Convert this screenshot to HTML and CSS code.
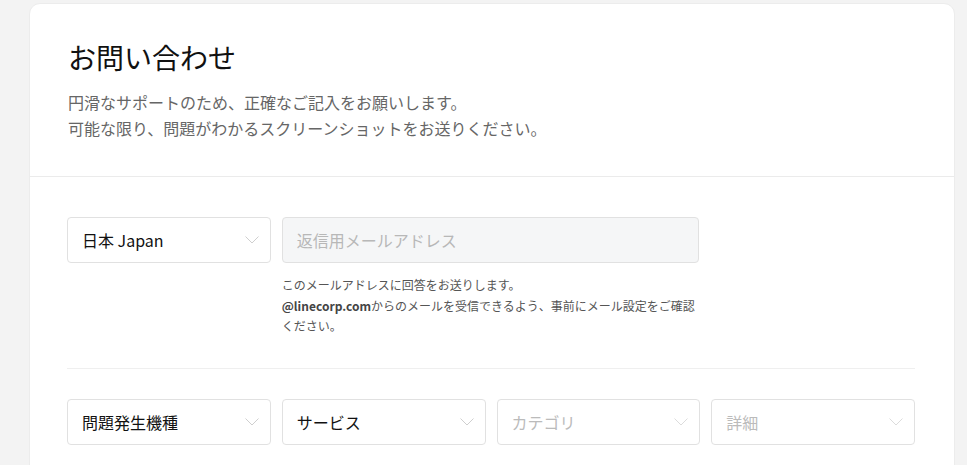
FILE: index.html
```html
<!DOCTYPE html>
<html lang="ja">
<head>
<meta charset="utf-8">
<title>お問い合わせ</title>
<link rel="stylesheet" href="styles.css">
</head>
<body>
<div class="page">
  <div class="card">
    <header class="card-head">
      <h1 class="title">お問い合わせ</h1>
      <p class="lead">円滑なサポートのため、正確なご記入をお願いします。<br>可能な限り、問題がわかるスクリーンショットをお送りください。</p>
    </header>
    <section class="card-body">
      <div class="row row-mail">
        <div class="select">
          <span class="value">日本 Japan</span>
          <svg class="chev" width="14" height="8" viewBox="0 0 14 8"><polyline points="0.5,0.5 7,7 13.5,0.5" fill="none" stroke="#cfcfcf" stroke-width="1"/></svg>
        </div>
        <div class="mail-col">
          <div class="input"><span class="ph">返信用メールアドレス</span></div>
          <p class="help">このメールアドレスに回答をお送りします。<br><b>@linecorp.com</b>からのメールを受信できるよう、事前にメール設定をご確認<br>ください。</p>
        </div>
      </div>
      <hr class="sep">
      <div class="row row-four">
        <div class="select">
          <span class="value">問題発生機種</span>
          <svg class="chev" width="14" height="8" viewBox="0 0 14 8"><polyline points="0.5,0.5 7,7 13.5,0.5" fill="none" stroke="#cfcfcf" stroke-width="1"/></svg>
        </div>
        <div class="select">
          <span class="value">サービス</span>
          <svg class="chev" width="14" height="8" viewBox="0 0 14 8"><polyline points="0.5,0.5 7,7 13.5,0.5" fill="none" stroke="#cfcfcf" stroke-width="1"/></svg>
        </div>
        <div class="select">
          <span class="value ph">カテゴリ</span>
          <svg class="chev" width="14" height="8" viewBox="0 0 14 8"><polyline points="0.5,0.5 7,7 13.5,0.5" fill="none" stroke="#dcdcdc" stroke-width="1"/></svg>
        </div>
        <div class="select">
          <span class="value ph">詳細</span>
          <svg class="chev" width="14" height="8" viewBox="0 0 14 8"><polyline points="0.5,0.5 7,7 13.5,0.5" fill="none" stroke="#dcdcdc" stroke-width="1"/></svg>
        </div>
      </div>
    </section>
  </div>
</div>
</body>
</html>
```

FILE: styles.css
```css
* { box-sizing: border-box; }
html, body { margin: 0; padding: 0; }
body {
  background: #f3f3f3;
  font-family: "Noto Sans CJK JP", "Noto Sans", "Liberation Sans", sans-serif;
  color: #111;
}
.page {
  padding: 3px 0 0 29px;
  height: 465px;
  overflow: hidden;
}
.card {
  width: 926px;
  background: #fff;
  border-radius: 11px;
  border: 1px solid #ececec;
  min-height: 600px;
}
.card-head {
  padding: 33px 38px 35px;
  border-bottom: 1px solid #ebebeb;
}
.title {
  margin: 0;
  font-size: 28px;
  font-weight: 400;
  line-height: 40px;
  color: #111;
}
.lead {
  margin: 12px 0 0;
  font-size: 16px;
  line-height: 26px;
  color: #666;
}
.card-body {
  padding: 40px 39px 0 37px;
}
.row {
  display: grid;
  grid-template-columns: repeat(4, 1fr);
  column-gap: 11px;
}
.mail-col {
  grid-column: span 2;
}
.select, .input {
  height: 46px;
  border: 1px solid #e1e1e1;
  border-radius: 4px;
  display: flex;
  align-items: center;
  padding: 0 11px 0 14px;
  background: #fff;
}
.select .value {
  flex: 1;
  font-size: 16px;
  color: #111;
  white-space: nowrap;
}
.chev { flex: none; }
.ph { color: #b8b8b8; }
.select .value.ph { color: #bbb; }
.input {
  background: #f5f6f7;
  font-size: 16px;
  width: 417px;
}
.help {
  margin: 12px 0 0;
  font-size: 12px;
  line-height: 20.5px;
  color: #555;
  white-space: nowrap;
}
.help b { color: #444; font-weight: 700; }
.sep {
  border: 0;
  border-top: 1px solid #efefef;
  margin: 31px 0 30px;
}
```
